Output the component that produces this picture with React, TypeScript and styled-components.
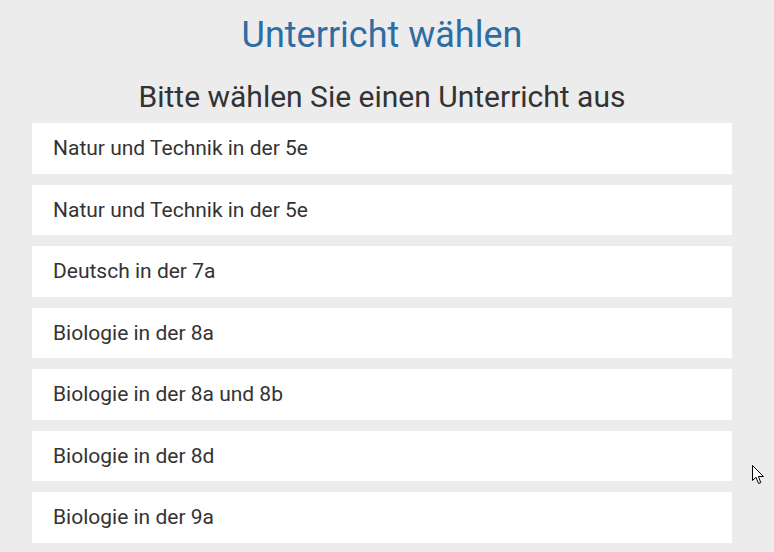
import React from "react";
import styled, { createGlobalStyle } from "styled-components";

const GlobalStyle = createGlobalStyle`
  html, body {
    margin: 0;
    padding: 0;
    background: #ececec;
    font-family: Roboto, "Noto Sans", sans-serif;
    overflow: hidden;
  }
`;

const Page = styled.div`
  width: 774px;
  height: 552px;
  box-sizing: border-box;
  padding: 0 42px 0 32px;
  position: relative;
`;

const Title = styled.h1`
  margin: 0;
  padding-top: 14px;
  font-size: 36px;
  font-weight: 400;
  line-height: 42px;
  color: #2e6da4;
  text-align: center;
`;

const Subtitle = styled.h2`
  margin: 0;
  padding-top: 23px;
  font-size: 30px;
  font-weight: 400;
  line-height: 36px;
  color: #333333;
  text-align: center;
`;

const List = styled.ul`
  list-style: none;
  margin: 0;
  padding: 0;
  padding-top: 8px;
  display: flex;
  flex-direction: column;
  gap: 11px;
`;

const Item = styled.li`
  height: 50.5px;
  box-sizing: border-box;
  background: #ffffff;
  padding-left: 21px;
  display: flex;
  align-items: center;
  font-size: 21px;
  color: #333333;
  cursor: pointer;
`;

const Cursor = styled.svg`
  position: absolute;
  left: 752px;
  top: 465px;
`;

const lessons = [
  "Natur und Technik in der 5e",
  "Natur und Technik in der 5e",
  "Deutsch in der 7a",
  "Biologie in der 8a",
  "Biologie in der 8a und 8b",
  "Biologie in der 8d",
  "Biologie in der 9a",
];

export default function App() {
  return (
    <Page>
      <GlobalStyle />
      <Title>Unterricht wählen</Title>
      <Subtitle>Bitte wählen Sie einen Unterricht aus</Subtitle>
      <List>
        {lessons.map((l, i) => (
          <Item key={i}>{l}</Item>
        ))}
      </List>
      <Cursor width="13" height="21" viewBox="0 0 13 21">
        <path
          d="M0.5 0.5 L0.5 15.5 L4 12.2 L6.5 18.5 L8.8 17.6 L6.4 11.5 L11.5 11.5 Z"
          fill="#ffffff"
          stroke="#000000"
          strokeWidth="1"
          strokeLinejoin="miter"
        />
      </Cursor>
    </Page>
  );
}
